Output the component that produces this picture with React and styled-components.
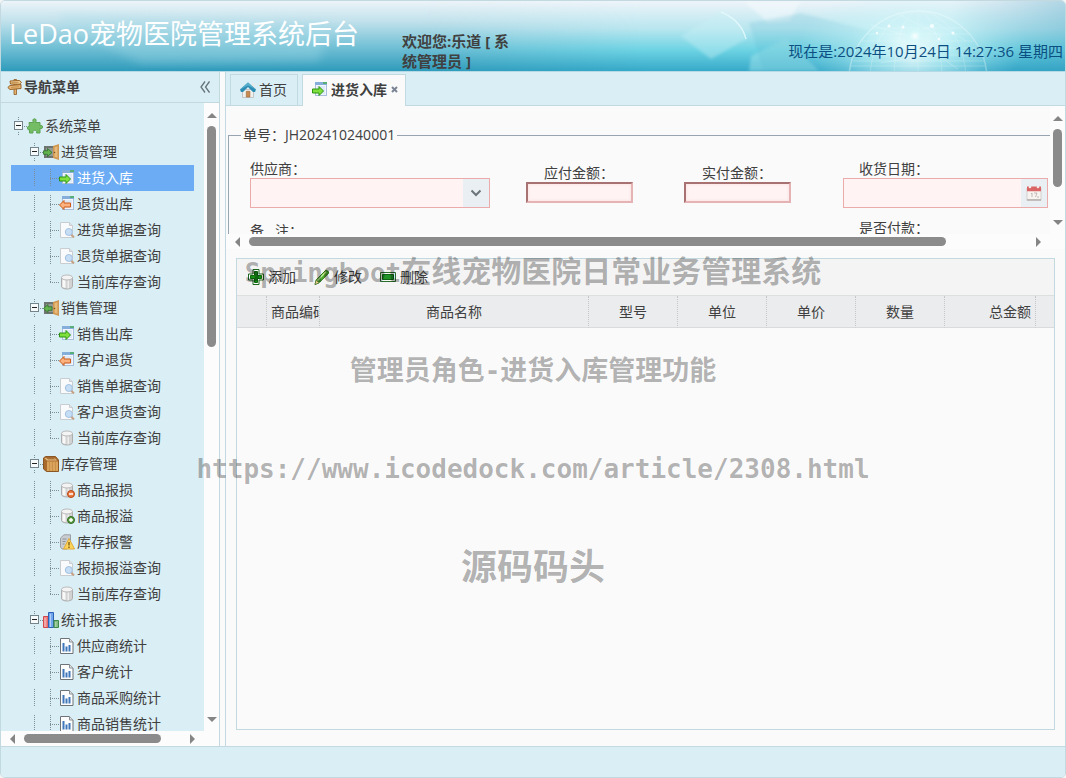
import React from "react";
import styled, { createGlobalStyle, css } from "styled-components";

const GlobalStyle = createGlobalStyle`
  * {
    box-sizing: border-box;
  }

  body {
    margin: 0;
    background: #f4f4f4;
    color: #404040;
    font-family: "Open Sans", "Noto Sans CJK SC", sans-serif;
    font-size: 14px;
    line-height: 18px;
  }

  button, input, select {
    font: inherit;
    color: inherit;
  }

  svg {
    display: block;
  }
`;

const line = "#c3d9e0";
const pale = "#daeef5";
const paper = "#fafafa";

const Page = styled.div`
  position: relative;
  display: flex;
  flex-direction: column;
  height: 100vh;
  border: 1px solid ${line};
  border-radius: 5px;
  overflow: hidden;
  background: ${paper};
`;

/* ---------- top banner ---------- */

const Banner = styled.header`
  position: relative;
  display: flex;
  flex: 0 0 71px;
  border-bottom: 1px solid #b5d9e5;
  overflow: hidden;
  font-size: 15px;
  line-height: 20px;
`;

const BannerArt = styled.svg`
  position: absolute;
  inset: 0;
  width: 100%;
  height: 100%;
`;

const Brand = styled.h1`
  position: relative;
  flex: 0 0 401px;
  margin: 0;
  padding-left: 8px;
  color: #fff;
  font-size: 27px;
  font-weight: 400;
  line-height: 66px;
  white-space: nowrap;
`;

const Greeting = styled.div`
  position: relative;
  align-self: flex-end;
  width: 116px;
  font-weight: 700;
`;

const Clock = styled.div`
  position: relative;
  align-self: flex-end;
  margin-left: auto;
  padding: 0 2px 10px 0;
  color: #0c4f82;
  white-space: nowrap;
`;

/* ---------- frame ---------- */

const Middle = styled.div`
  display: flex;
  flex: 1;
  min-height: 0;
`;

const Footer = styled.footer`
  flex: 0 0 31px;
  border-top: 1px solid ${line};
  background: ${pale};
`;

const Sidebar = styled.aside`
  display: flex;
  flex-direction: column;
  flex: 0 0 219px;
  margin-right: 5px;
  border-right: 1px solid ${line};
  background: ${pale};
`;

const SideTitle = styled.div`
  display: flex;
  align-items: center;
  flex: 0 0 31px;
  gap: 1px;
  padding: 0 9px 0 6px;
  border-bottom: 1px solid ${line};
  font-weight: 700;

  span {
    flex: 1;
  }
`;

const CollapseButton = styled.button`
  padding: 0;
  border: 0;
  background: none;
`;

const ScrollArea = styled.div`
  display: grid;
  grid-template-columns: minmax(0, 1fr) 15px;
  grid-template-rows: minmax(0, 1fr) 15px;
  min-height: 0;
  background: #fcfcfc;
  flex: ${(p) => (p.$height ? `0 0 ${p.$height}px` : "1")};
  ${(p) => p.$height && `height: ${p.$height}px;`}
`;

const Viewport = styled.div`
  min-height: 0;
  overflow: hidden;
  background: ${(p) => p.$bg};
`;

const Bar = styled.div`
  display: flex;
  flex-direction: ${(p) => (p.$vertical ? "column" : "row")};
  min-width: 0;
  min-height: 0;
`;

const BarEnd = styled.div`
  display: flex;
  align-items: center;
  justify-content: center;
  flex: 0 0 23px;
`;

const Track = styled.div`
  flex: 1;
  min-height: 0;
  padding: ${(p) => (p.$vertical ? "0 3px" : "3px 0")};
`;

const Thumb = styled.div`
  border-radius: 5px;
  background: #8b8b8b;
  ${(p) =>
    p.$vertical
      ? css`
          height: ${p.$size}%;
          width: 9px;
        `
      : css`
          width: ${p.$size}%;
          height: 9px;
        `}
`;

const arrows = {
  up: "M0 8 L5 3 L10 8Z",
  down: "M0 2 L5 7 L10 2Z",
  left: "M7 0 L2 5 L7 10Z",
  right: "M2 0 L7 5 L2 10Z",
};

const Arrow = ({ dir }) => (
  <svg width="10" height="10" fill="#858585">
    <path d={arrows[dir]} />
  </svg>
);

const ScrollBar = ({ vertical, size }) => (
  <Bar $vertical={vertical} aria-hidden="true">
    <BarEnd>
      <Arrow dir={vertical ? "up" : "left"} />
    </BarEnd>
    <Track $vertical={vertical}>
      <Thumb $vertical={vertical} $size={size} />
    </Track>
    <BarEnd>
      <Arrow dir={vertical ? "down" : "right"} />
    </BarEnd>
  </Bar>
);

/* ---------- icons ---------- */

const IconSvg = styled.svg`
  flex: none;
  width: 16px;
  height: 16px;
`;

const Icon = ({ children }) => <IconSvg viewBox="0 0 16 16">{children}</IconSvg>;

const GreenArrow = ({ flip }) => (
  <path
    d={
      flip
        ? "M5 4.500v2.500h6.500v4H5v2.500L.5 9z"
        : "M7 4.500v2.500H.5v4H7v2.500L11.500 9z"
    }
    fill={flip ? "#fbb27e" : "#7fe03c"}
    stroke={flip ? "#cd5a18" : "#2c9412"}
  />
);

const WindowSheet = () => (
  <>
    <rect x="3.500" y=".5" width="11" height="13" fill="#f2f6fc" stroke="#a9bedb" />
    <path d="M3 0h12v3H3z" fill="#86aedb" />
    <path d="M11 0h4v2h-4z" fill="#58ae78" />
    <path d="M5 4h8v8H5z" fill="#dde9f8" />
  </>
);

const Cylinder = () => (
  <>
    <path d="M2.500 3.500v9c0 1.300 2.500 2.500 5.500 2.500s5.500-1.200 5.500-2.500v-9z" fill="#d2d2d2" stroke="#adadad" />
    <path d="M3.500 5v8l3 1V6z" fill="#f8f8f8" />
    <path d="M8.500 6v8.500l1.500-.2V6z" fill="#ededed" />
    <ellipse cx="8" cy="3.500" rx="5.500" ry="2.500" fill="#f4f4f4" stroke="#bababa" />
  </>
);

const Door = ({ flip }) => (
  <>
    <path d="M1 2h10v12H1z" fill="#6e746f" />
    <path d="M3 4h7v8H3z" fill="#929a93" />
    <path d="M10 2l6-2v16l-6-2z" fill="#cf9750" />
    <path d="M11.500 3.200l3-1v11.500l-3-1z" fill="#e6ba79" />
    <circle cx="11.500" cy="8.500" r=".8" fill="#775020" />
    <path
      d={flip ? "M5 4.500v2.300h4v3.500H5v2.200L.5 8.500z" : "M4.500 4.500v2.300h-4v3.500h4v2.200L9 8.500z"}
      fill="#63b44f"
      stroke="#2c702a"
      strokeWidth=".8"
    />
  </>
);

const icons = {
  sign: (
    <Icon>
      <path d="M7 .5h2.500v15H7z" fill="#e3b26e" stroke="#8d5a24" strokeWidth=".8" />
      <path d="M3 2l9.500-.5 2 1.800-2 2L3.500 5z" fill="#f0c98d" stroke="#9a6429" />
      <path d="M.8 8.500L3 6.500l11-1v4l-11 1z" fill="#e6b573" stroke="#9a6429" />
      <path d="M4.500 3.500h7M4 8.500l8-.8" stroke="#b98242" strokeWidth=".7" />
    </Icon>
  ),
  puzzle: (
    <Icon>
      <path
        d="M2 4.500h4.500C5.300 2.500 5.800.8 7.500.8S9.700 2.500 8.500 4.500H13v3.300c1.500-.8 2.600-.3 2.600 1.200s-1.100 2-2.600 1.200V15H9.500c.6-2-.3-2.700-1.700-2.700S5.500 13 6 15H2.500v-3.500C1.300 12.200.4 11.400.4 10s1-2 2.100-1.500z"
        fill="#74bd65"
        stroke="#5da354"
      />
    </Icon>
  ),
  doorIn: (
    <Icon>
      <Door />
    </Icon>
  ),
  doorOut: (
    <Icon>
      <Door flip />
    </Icon>
  ),
  box: (
    <Icon>
      <path d="M.5 2L2.500.5h10L15.500 4v11.500h-12L.5 13z" fill="#a86a2c" stroke="#8a5622" />
      <path d="M1.500 2h10L14 4.500H4z" fill="#ecc489" />
      <path d="M3 2h8l1.500 1.500H5z" fill="#a87037" />
      <path d="M4 5.500h11v9.500H4z" fill="#dba45c" />
      <path d="M6.500 6v9M9.500 6v9M12.500 6v9" stroke="#c9904b" />
    </Icon>
  ),
  chart: (
    <Icon>
      <path d="M.5 4.500h4.500v11H.5z" fill="#f08a8a" stroke="#d2474b" />
      <path d="M5.500.5h5v15h-5z" fill="#6fa6ee" stroke="#2b62b5" />
      <path d="M11 8.500h4.500v7H11z" fill="#82bc82" stroke="#3f8a48" />
      <path d="M1.500 6h1v9h-1zM7 2h1v13H7zM12.300 10h1v5h-1z" fill="#fff" opacity=".45" />
    </Icon>
  ),
  arrowIn: (
    <Icon>
      <WindowSheet />
      <GreenArrow />
    </Icon>
  ),
  arrowOut: (
    <Icon>
      <WindowSheet />
      <GreenArrow flip />
    </Icon>
  ),
  search: (
    <Icon>
      <path d="M1.500.5h9l3 3v12h-12z" fill="#f8fafb" stroke="#c8cdd1" />
      <path d="M10.500.5v3h3" fill="#dfe4e8" stroke="#c8cdd1" />
      <path d="M12 12.500l3 3" stroke="#c4a084" strokeWidth="2" />
      <circle cx="9.800" cy="10" r="3.500" fill="#c6def5" stroke="#a3c1df" />
    </Icon>
  ),
  stock: (
    <Icon>
      <Cylinder />
    </Icon>
  ),
  stockMinus: (
    <Icon>
      <Cylinder />
      <circle cx="12" cy="12" r="3.500" fill="#ed7b42" stroke="#b64517" />
      <path d="M10 12h4" stroke="#fff" strokeWidth="1.500" />
    </Icon>
  ),
  stockPlus: (
    <Icon>
      <Cylinder />
      <circle cx="12" cy="12" r="3.500" fill="#5a9b43" stroke="#306d22" />
      <path d="M10 12h4M12 10v4" stroke="#fff" strokeWidth="1.500" />
    </Icon>
  ),
  warning: (
    <Icon>
      <path d="M1.500 4L5 .8h6.500v11L8 15H3l-1.500-2z" fill="#c9ccd0" stroke="#9ba0a4" />
      <path d="M3.500 5h4M3.500 7.500h3M3.500 10h2" stroke="#8d9195" />
      <path d="M10 4.500L15.600 15H4.500z" fill="#fbd45a" stroke="#dfa93a" />
      <path d="M10 8v3.500M10 12.500V14" stroke="#7a5510" strokeWidth="1.300" />
    </Icon>
  ),
  report: (
    <Icon>
      <path d="M1.500.5h9l3.500 3.500v11.500H1.500z" fill="#fdfdfd" stroke="#6d7378" />
      <path d="M10.500.5V4H14" fill="#e4e4e4" stroke="#8a9096" />
      <path d="M4.500 5v8.500M7.500 8.500v5M10.500 7v6.500" stroke="#3f77ba" strokeWidth="2" />
    </Icon>
  ),
  home: (
    <Icon>
      <path d="M2.500 7.500h11v8h-11z" fill="#f0f0ee" stroke="#c4c4c4" />
      <path d="M12 .8h2.500V6H12z" fill="#e8e8e8" />
      <path d="M8 .5L16 7.500l-1 2.500H13L8 5 3 10H1L0 7.500z" fill="#2b8db4" />
      <path d="M8 .5L16 7.500 8 3.500 0 7.500z" fill="#57aecb" />
      <path d="M6.300 9.300h3.600V15H6.300z" fill="#c98a50" stroke="#9b6533" strokeWidth=".6" />
    </Icon>
  ),
  add: (
    <Icon>
      <path d="M5 .5h6V5h4.500v6H11v4.500H5V11H.5V5H5z" fill="#fff" stroke="#1c651c" />
      <path d="M6.500 2.500h3v4h4v3h-4v4h-3v-4h-4v-3h4z" fill="#169016" stroke="#0a680b" />
    </Icon>
  ),
  edit: (
    <Icon>
      <path d="M1 15.500l1.200-4.500L11.500 1.500c1-.9 3.800 1.300 3 2.800L5 13.800z" fill="#4cad2a" stroke="#28721a" />
      <path d="M3.500 11.500L12 2.800" stroke="#c5f09c" strokeWidth="1.300" />
      <path d="M1 15.500l1.200-4.300L5 13.800z" fill="#ecd59a" stroke="#4b6a2e" strokeWidth=".5" />
    </Icon>
  ),
  remove: (
    <Icon>
      <path d="M.5 3.500h15v9H.5z" fill="#f4faf4" stroke="#2b6b2b" />
      <path d="M2.500 5.500h11v5h-11z" fill="#21952a" stroke="#0d6612" />
    </Icon>
  ),
  calendar: (
    <Icon>
      <path d="M1 3h14v12.500H1z" fill="#f7f3f1" stroke="#c9c2be" strokeWidth=".7" />
      <path d="M1 1.500h14v4.800H1z" fill="#d96664" />
      <path d="M1 14h14v1.700H1z" fill="#bdb9b6" />
      <circle cx="4" cy="2" r="1.300" fill="#f7eaea" />
      <circle cx="12" cy="2" r="1.300" fill="#f7eaea" />
      <path d="M5 9l1-1v4M8 8h3l-1.500 4M11 12h2" fill="none" stroke="#b9a8a4" strokeWidth=".8" />
    </Icon>
  ),
};

/* ---------- navigation tree ---------- */

const Tree = styled.ul`
  margin: 0;
  padding: 10px;
  list-style: none;

  ul {
    margin: 0;
    padding: 0;
    list-style: none;
  }
`;

const Node = styled.a`
  display: flex;
  align-items: center;
  height: 26px;
  color: ${(p) => (p.$active ? "#fff" : "#404040")};
  background: ${(p) => (p.$active ? "#6bacf5" : "none")};
  text-decoration: none;
  white-space: nowrap;
`;

const NodeText = styled.span`
  padding-left: 2px;
`;

const JointSvg = styled.svg`
  flex: none;
  width: 16px;
  height: 18px;
`;

const joints = {
  blank: "",
  line: "M7.500 0V18",
  join: "M7.500 0V18M7 9.500H16",
  end: "M7.500 0V10M7 9.500H16",
  open: "M7.500 0V4M7.500 15V18M13 9.500H16",
};

const Joint = ({ kind }) => (
  <JointSvg>
    <path d={joints[kind]} stroke="#7d8f96" strokeDasharray="1 1" fill="none" />
    {kind === "open" && (
      <>
        <rect x="3.500" y="4.500" width="8" height="8" fill="#f6fafb" stroke="#75838a" />
        <path d="M5 8.500h5" stroke="#222" />
      </>
    )}
  </JointSvg>
);

const menu = [
  {
    text: "进货管理",
    icon: "doorIn",
    items: [
      ["进货入库", "arrowIn"],
      ["退货出库", "arrowOut"],
      ["进货单据查询", "search"],
      ["退货单据查询", "search"],
      ["当前库存查询", "stock"],
    ],
  },
  {
    text: "销售管理",
    icon: "doorOut",
    items: [
      ["销售出库", "arrowIn"],
      ["客户退货", "arrowOut"],
      ["销售单据查询", "search"],
      ["客户退货查询", "search"],
      ["当前库存查询", "stock"],
    ],
  },
  {
    text: "库存管理",
    icon: "box",
    items: [
      ["商品报损", "stockMinus"],
      ["商品报溢", "stockPlus"],
      ["库存报警", "warning"],
      ["报损报溢查询", "search"],
      ["当前库存查询", "stock"],
    ],
  },
  {
    text: "统计报表",
    icon: "chart",
    items: [
      ["供应商统计", "report"],
      ["客户统计", "report"],
      ["商品采购统计", "report"],
      ["商品销售统计", "report"],
    ],
  },
];

const NavTree = ({ active }) => (
  <Tree>
    <li>
      <Node href="#">
        <Joint kind="open" />
        {icons.puzzle}
        <NodeText>系统菜单</NodeText>
      </Node>
      <ul>
        {menu.map((group, g) => (
          <li key={group.text}>
            <Node href="#">
              <Joint kind="blank" />
              <Joint kind="open" />
              {icons[group.icon]}
              <NodeText>{group.text}</NodeText>
            </Node>
            <ul>
              {group.items.map(([text, icon], i) => (
                <li key={text}>
                  <Node href="#" $active={text === active}>
                    <Joint kind="blank" />
                    <Joint kind="line" />
                    <Joint
                      kind={
                        i === group.items.length - 1 && g < menu.length - 1
                          ? "end"
                          : "join"
                      }
                    />
                    {icons[icon]}
                    <NodeText>{text}</NodeText>
                  </Node>
                </li>
              ))}
            </ul>
          </li>
        ))}
      </ul>
    </li>
  </Tree>
);

/* ---------- tabs ---------- */

const Main = styled.main`
  display: flex;
  flex-direction: column;
  flex: 1;
  min-width: 0;
  border-left: 1px solid ${line};
`;

const Tabs = styled.div`
  display: flex;
  flex: 0 0 34px;
  gap: 4px;
  padding: 2px 4px 0;
  border-bottom: 1px solid ${line};
  background: ${pale};
`;

const Tab = styled.div`
  display: flex;
  align-items: center;
  gap: 3px;
  padding: 0 ${(p) => (p.$active ? 6 : 10)}px ${(p) => (p.$active ? 2 : 0)}px 9px;
  border: 1px solid ${line};
  border-bottom: 0;
  background: ${(p) => (p.$active ? paper : pale)};
  font-weight: ${(p) => (p.$active ? 700 : 400)};
  margin-bottom: ${(p) => (p.$active ? -1 : 0)}px;

  a {
    color: inherit;
    text-decoration: none;
  }
`;

const CloseButton = styled.button`
  display: flex;
  padding: 1px;
  border: 0;
  background: none;
`;

/* ---------- receipt form ---------- */

const Receipt = styled.fieldset`
  width: 912px;
  height: 200px;
  margin: 19px 0 0 2px;
  padding: 0 12px;
  border: 1px solid #98a4b0;
`;

const Legend = styled.legend`
  padding: 0 2px;
  line-height: 20px;
`;

const Fields = styled.div`
  display: grid;
  grid-template-columns: 240px 178px 138px 242px;
  row-gap: 11px;
  align-items: center;
  padding: 15px 9px;
`;

const Field = styled.div`
  display: flex;
  flex-direction: column;
  align-items: ${(p) => (p.$center ? "center" : "stretch")};
  width: ${(p) => (p.$wide ? "205px" : "auto")};
  padding-bottom: ${(p) => (p.$center ? 1 : 0)}px;
  grid-column: ${(p) => p.$column};
  justify-self: ${(p) => (p.$wide ? "end" : "stretch")};

  label {
    padding-left: ${(p) => (p.$wide ? 16 : 0)}px;
    white-space: pre;
  }
`;

const Combo = styled.div`
  display: flex;
  height: ${(p) => p.$height || 30}px;
  border: 1px solid #ebabab;
  background: #fff3f3;

  input,
  select {
    flex: 1;
    min-width: 0;
    padding: 0 4px;
    border: 0;
    outline: 0;
    background: none;
    appearance: none;
  }
`;

const Addon = styled.span`
  display: flex;
  align-items: center;
  justify-content: center;
  flex: 0 0 26px;
  background: #e9eff2;
`;

const AmountInput = styled.input`
  width: 107px;
  height: 21px;
  border: 2px solid;
  border-color: #a87272 #e5b3b3 #e5b3b3 #a87272;
  outline: 0;
  background: #fff3f3;
  box-shadow: inset 0 0 3px #f8dada;
`;

/* ---------- goods grid ---------- */

const Panel = styled.section`
  display: flex;
  flex-direction: column;
  flex: 1;
  min-height: 0;
  margin: 9px 10px 16px;
  border: 1px solid ${line};
`;

const Toolbar = styled.div`
  display: flex;
  flex: 0 0 37px;
  gap: 18px;
  padding-left: 11px;
  border-bottom: 1px solid #dcdfe0;
  background: #f4f4f4;
`;

const ToolButton = styled.button`
  display: flex;
  align-items: center;
  gap: 4px;
  padding: 0;
  border: 0;
  background: none;
`;

const Grid = styled.table`
  width: 100%;
  table-layout: fixed;
  border-collapse: separate;
  border-spacing: 0;
  background: #ebeced;

  th {
    height: 32px;
    padding: 0 4px;
    overflow: hidden;
    border-right: 1px dotted #c4c8ca;
    border-bottom: 1px solid #d9dcde;
    font-weight: 400;
    white-space: nowrap;
  }

  th:last-child {
    border-right: 0;
  }
`;

const Col = styled.col`
  width: ${(p) => (p.$width ? `${p.$width}px` : "auto")};
`;

const Head = styled.th`
  text-align: ${(p) => p.$align || "center"};
`;

const columns = [
  { width: 30 },
  { text: "商品编码", width: 53, align: "left" },
  { text: "商品名称" },
  { text: "型号", width: 89 },
  { text: "单位", width: 89 },
  { text: "单价", width: 89 },
  { text: "数量", width: 89 },
  { text: "总金额", width: 91, align: "right" },
  { width: 18 },
];

/* ---------- overlay text ---------- */

const Overlay = styled.div`
  position: absolute;
  inset: 0;
  display: flex;
  flex-direction: column;
  align-items: center;
  padding-top: 218px;
  color: rgba(0, 0, 0, 0.3);
  font-family: "DejaVu Sans Mono", "Noto Sans CJK SC", monospace;
  font-weight: 700;
  pointer-events: none;
`;

const Mark = styled.div`
  font-family: ${(p) => (p.$cjk ? '"Noto Sans CJK SC", sans-serif' : "inherit")};
  font-size: ${(p) => p.$size}px;
  line-height: ${(p) => p.$line || 100}px;
  white-space: nowrap;
`;

const Latin = styled.span`
  font-family: "DejaVu Sans Mono", monospace;
  font-size: 26px;
  line-height: 1;
`;

const BannerBackdrop = () => (
  <BannerArt viewBox="0 0 1064 70" preserveAspectRatio="none" aria-hidden="true">
    <defs>
      <linearGradient id="sky" x2="0" y2="1">
        <stop offset="0" stopColor="#ecf4f9" />
        <stop offset=".28" stopColor="#c3e2ec" />
        <stop offset=".65" stopColor="#74c1d6" />
        <stop offset="1" stopColor="#2f9bbb" />
      </linearGradient>
      <linearGradient id="aqua" x2="0" y2="1">
        <stop offset="0" stopColor="#edf4f9" />
        <stop offset=".4" stopColor="#b8e6ef" />
        <stop offset=".7" stopColor="#6dd3e3" />
        <stop offset="1" stopColor="#36a9c9" />
      </linearGradient>
      <linearGradient id="fadeIn">
        <stop offset="0" stopColor="#000" />
        <stop offset=".35" stopColor="#fff" />
      </linearGradient>
      <mask id="side">
        <rect x="420" width="644" height="70" fill="url(#fadeIn)" />
      </mask>
      <radialGradient id="glow">
        <stop offset="0" stopColor="#fff" stopOpacity=".9" />
        <stop offset=".4" stopColor="#d2f8fa" stopOpacity=".55" />
        <stop offset="1" stopColor="#c5f2f7" stopOpacity="0" />
      </radialGradient>
      <linearGradient id="edge">
        <stop offset="0" stopColor="#3194b8" stopOpacity="0" />
        <stop offset="1" stopColor="#3194b8" stopOpacity=".45" />
      </linearGradient>
      <filter id="soft">
        <feGaussianBlur stdDeviation="5" />
      </filter>
      <filter id="haze">
        <feGaussianBlur stdDeviation="1.500" />
      </filter>
    </defs>
    <rect width="1064" height="70" fill="url(#sky)" />
    <rect x="420" width="644" height="70" fill="url(#aqua)" mask="url(#side)" />
    <path d="M60 14L330 22 318 60 140 62 60 24z" fill="#a5dce8" opacity=".35" filter="url(#soft)" />
    <g filter="url(#haze)">
      <path d="M680 35L720 11Q740 19 745 38L710 58z" fill="#c9f1f6" opacity=".4" />
      <path d="M750 55L785 38 818 70H748z" fill="#a9e7ee" opacity=".45" />
      <path d="M742 0H800L788 19 767 21z" fill="#f7fcfd" opacity=".5" />
      <path d="M748 22L762 70H850L870 30 800 12z" fill="#4fb4cb" opacity=".2" />
    </g>
    <path d="M720 11Q740 19 745 38" fill="none" stroke="#e5fafd" strokeWidth="1.500" opacity=".8" />
    <ellipse cx="912" cy="42" rx="115" ry="56" fill="url(#glow)" />
    <ellipse cx="912" cy="60" rx="70" ry="50" fill="url(#glow)" opacity=".5" />
    <g fill="none" stroke="#f3ffff" strokeWidth=".7" opacity=".35">
      <circle cx="917" cy="79" r="69" strokeWidth="1.500" />
      <ellipse cx="917" cy="79" rx="48" ry="69" />
      <ellipse cx="917" cy="79" rx="24" ry="69" />
      <path d="M872 27H962M865 33H970M860 40H974M856 47H978M854 54H982M852 60H983M850 65H984M917 10V70" />
      <path d="M870 24L910 36 957 68M895 12L940 35 920 55 880 62M910 36L935 22 965 40" />
    </g>
    <g fill="#fff" opacity=".8">
      <circle cx="888" cy="25" r="1.500" />
      <circle cx="902" cy="26" r="1.500" />
      <circle cx="931" cy="25" r="2" />
      <circle cx="952" cy="32" r="1.500" />
      <circle cx="938" cy="38" r="1.200" />
      <circle cx="876" cy="32" r="1.200" />
    </g>
    <circle cx="914" cy="35" r="14" fill="url(#glow)" />
    <rect x="950" width="114" height="70" fill="url(#edge)" opacity=".7" />
  </BannerArt>
);

const App = () => {
  return (
    <Page>
      <GlobalStyle />
      <Banner>
        <BannerBackdrop />
        <Brand>LeDao宠物医院管理系统后台</Brand>
        <Greeting>欢迎您:乐道 [ 系统管理员 ]</Greeting>
        <Clock>现在是:2024年10月24日 14:27:36 星期四</Clock>
      </Banner>

      <Middle>
        <Sidebar>
          <SideTitle>
            {icons.sign}
            <span>导航菜单</span>
            <CollapseButton aria-label="收起">
              <svg width="10" height="12" fill="none" stroke="#66747a" strokeWidth="1.300">
                <path d="M5 .5L1 6l4 5.500M9.500 .5l-4 5.500 4 5.500" />
              </svg>
            </CollapseButton>
          </SideTitle>
          <ScrollArea>
            <Viewport $bg={pale}>
              <NavTree active="进货入库" />
            </Viewport>
            <ScrollBar vertical size={38} />
            <ScrollBar size={87} />
          </ScrollArea>
        </Sidebar>

        <Main>
          <Tabs>
            <Tab>
              {icons.home}
              <a href="#">首页</a>
            </Tab>
            <Tab $active>
              {icons.arrowIn}
              <a href="#">进货入库</a>
              <CloseButton aria-label="关闭">
                <svg width="7" height="7" stroke="#7b8494" strokeWidth="2">
                  <path d="M1 1l5 5M6 1L1 6" />
                </svg>
              </CloseButton>
            </Tab>
          </Tabs>

          <ScrollArea $height={143}>
            <Viewport $bg={paper}>
              <Receipt>
                <Legend>单号：JH202410240001</Legend>
                <Fields>
                  <Field>
                    <label htmlFor="supplier">供应商：</label>
                    <Combo>
                      <select id="supplier" />
                      <Addon>
                        <svg width="12" height="8" fill="none" stroke="#6c757a" strokeWidth="2">
                          <path d="M1.500 1.500L6 6l4.500-4.500" />
                        </svg>
                      </Addon>
                    </Combo>
                  </Field>
                  <Field $center>
                    <label htmlFor="payable">应付金额：</label>
                    <AmountInput id="payable" />
                  </Field>
                  <Field $center>
                    <label htmlFor="paid">实付金额：</label>
                    <AmountInput id="paid" />
                  </Field>
                  <Field $wide>
                    <label htmlFor="date">收货日期：</label>
                    <Combo>
                      <input id="date" type="text" />
                      <Addon>{icons.calendar}</Addon>
                    </Combo>
                  </Field>
                  <Field>
                    <label htmlFor="remarks">{"备   注："}</label>
                    <Combo $height={24}>
                      <input id="remarks" type="text" />
                    </Combo>
                  </Field>
                  <Field $wide $column={4}>
                    <label htmlFor="state">是否付款：</label>
                    <Combo>
                      <select id="state" />
                    </Combo>
                  </Field>
                </Fields>
              </Receipt>
            </Viewport>
            <ScrollBar vertical size={71} />
            <ScrollBar size={89.6} />
          </ScrollArea>

          <Panel>
            <Toolbar>
              <ToolButton>{icons.add}添加</ToolButton>
              <ToolButton>{icons.edit}修改</ToolButton>
              <ToolButton>{icons.remove}删除</ToolButton>
            </Toolbar>
            <Grid>
              <colgroup>
                {columns.map((c, index) => (
                  <Col key={index} $width={c.width} />
                ))}
              </colgroup>
              <thead>
                <tr>
                  {columns.map((c, index) => (
                    <Head key={index} $align={c.align}>
                      {c.text}
                    </Head>
                  ))}
                </tr>
              </thead>
            </Grid>
          </Panel>
        </Main>
      </Middle>

      <Footer />

      <Overlay>
        <Mark $size={30} $cjk>
          <Latin>Springboot</Latin>在线宠物医院日常业务管理系统
        </Mark>
        <Mark $size={27} $cjk>
          管理员角色<Latin>-</Latin>进货入库管理功能
        </Mark>
        <Mark $size={26}>https://www.icodedock.com/article/2308.html</Mark>
        <Mark $size={36} $line={90} $cjk>
          源码码头
        </Mark>
      </Overlay>
    </Page>
  );
};

export default App;
